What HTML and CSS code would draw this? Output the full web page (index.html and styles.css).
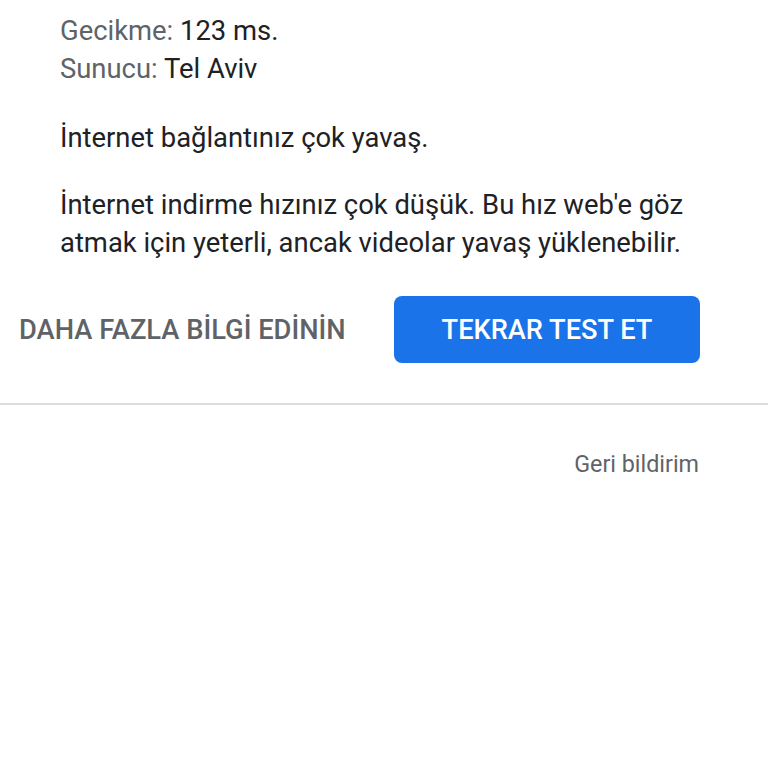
FILE: index.html
```html
<!DOCTYPE html>
<html lang="tr">
<head>
<meta charset="utf-8">
<link rel="stylesheet" href="styles.css">
</head>
<body>
<main class="page">
  <section class="info">
    <div class="stat"><span class="label">Gecikme:</span> 123 ms.</div>
    <div class="stat"><span class="label">Sunucu:</span> Tel Aviv</div>
    <p class="summary">İnternet bağlantınız çok yavaş.</p>
    <p class="detail">İnternet indirme hızınız çok düşük. Bu hız web'e göz atmak için yeterli, ancak videolar yavaş yüklenebilir.</p>
  </section>
  <div class="actions">
    <a class="link-btn">DAHA FAZLA BİLGİ EDİNİN</a>
    <a class="primary-btn">TEKRAR TEST ET</a>
  </div>
  <hr class="divider">
  <div class="footer">
    <a class="feedback">Geri bildirim</a>
  </div>
</main>
</body>
</html>
```
FILE: styles.css
```css
html, body {
  margin: 0;
  padding: 0;
  background: #ffffff;
}
body {
  font-family: Roboto, "Noto Sans", sans-serif;
  color: #202124;
}
.page {
  width: 768px;
}
.info {
  padding: 12px 66px 0 60px;
  font-size: 27.4px;
  line-height: 38px;
}
.label {
  color: #5f6368;
}
.summary {
  margin: 31px 0 0 0;
}
.detail {
  margin: 29px 0 0 0;
}
.actions {
  display: flex;
  align-items: center;
  justify-content: space-between;
  padding: 0 68px 0 19px;
  margin-top: 34px;
}
.link-btn {
  font-size: 27.3px;
  font-weight: 500;
  color: #5f6368;
}
.primary-btn {
  display: flex;
  align-items: center;
  justify-content: center;
  width: 306px;
  height: 67px;
  background: #1a73e8;
  color: #ffffff;
  border-radius: 8px;
  font-size: 27.2px;
  font-weight: 500;
}
.divider {
  border: 0;
  border-top: 2px solid #dadce0;
  margin: 40px 0 0 0;
}
.footer {
  display: flex;
  justify-content: flex-end;
  padding: 46px 69px 0 0;
}
.feedback {
  font-size: 23.3px;
  line-height: 27px;
  color: #5f6368;
}
```
